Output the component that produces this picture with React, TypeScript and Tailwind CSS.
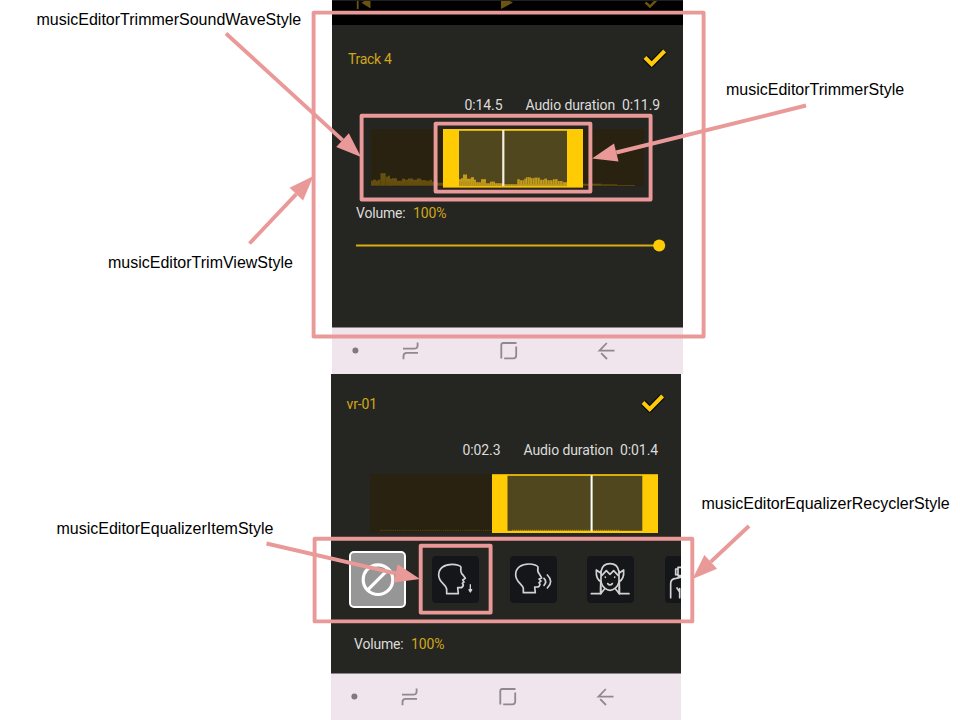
import type { ReactNode } from "react";

type Point = [number, number];
type Box = [number, number, number, number];
type Level = [number, number, number];

const BOXES: Box[] = [
  [313.6, 12.6, 703.6, 336.5],
  [361.6, 115.8, 650.6, 199.5],
  [435.6, 123.6, 590.4, 191.6],
  [314.6, 538.7, 692.3, 621.4],
  [420.7, 545.7, 490.6, 612.6],
];

const ARROWS: [Point, Point][] = [
  [[226, 33.5], [361, 157]],
  [[249.5, 243.5], [313.5, 176]],
  [[806, 105.5], [592, 158.5]],
  [[266.5, 543.5], [420, 579]],
  [[749, 526], [692.5, 579]],
];

const LABELS = [
  { text: "musicEditorTrimmerSoundWaveStyle", pos: "left-[36.5px] top-[8px]" },
  { text: "musicEditorTrimmerStyle", pos: "left-[726px] top-[78px]" },
  { text: "musicEditorTrimViewStyle", pos: "left-[108px] top-[251px]" },
  { text: "musicEditorEqualizerItemStyle", pos: "left-[56.5px] top-[517px]" },
  { text: "musicEditorEqualizerRecyclerStyle", pos: "left-[701.5px] top-[492px]" },
];

function Arrow({ from, to }: { from: Point; to: Point }) {
  const dx = to[0] - from[0];
  const dy = to[1] - from[1];
  const len = Math.hypot(dx, dy);
  const ux = dx / len;
  const uy = dy / len;
  const bx = to[0] - ux * 25;
  const by = to[1] - uy * 25;
  const h = 9.3;
  return (
    <g>
      <line x1={from[0]} y1={from[1]} x2={bx} y2={by} stroke="#ea9999" strokeWidth="3.9" />
      <polygon
        fill="#ea9999"
        points={`${to[0]},${to[1]} ${bx - uy * h},${by + ux * h} ${bx + uy * h},${by - ux * h}`}
      />
    </g>
  );
}

function Annotations() {
  return (
    <div className="pointer-events-none absolute inset-0">
      <svg width="960" height="720" className="absolute inset-0">
        {BOXES.map(([x1, y1, x2, y2]) => (
          <rect key={`${x1}-${y1}`} x={x1} y={y1} width={x2 - x1} height={y2 - y1} fill="none" stroke="#ea9999" strokeWidth="3.9" strokeLinejoin="round" />
        ))}
        {ARROWS.map(([a, b]) => (
          <Arrow key={a[0]} from={a} to={b} />
        ))}
      </svg>
      {LABELS.map((l) => (
        <span key={l.text} className={`absolute whitespace-nowrap text-[16px] leading-6 text-black ${l.pos}`}>
          {l.text}
        </span>
      ))}
    </div>
  );
}

function Check() {
  return (
    <svg width="26" height="22" viewBox="0 0.8 26 22" fill="none">
      <path d="M3.2 10.5 L9.7 17 L22.4 4" stroke="#0c0b08" strokeWidth="6.6" strokeLinejoin="round" />
      <path d="M3 10.3 L9.7 17 L22.6 3.8" stroke="#ffcb08" strokeWidth="4" />
    </svg>
  );
}

function NavBar() {
  return (
    <div className="h-[47px] shrink-0 border-t border-[#8b8588] bg-[#f0e4ed]">
      <svg width="350" height="46" viewBox="0 0 350 46" fill="none" stroke="#8f888d" strokeWidth="1.8">
        <circle cx="23.4" cy="22.6" r="3" fill="#807a7e" stroke="none" />
        <path d="M71 20.7 H82 Q85.6 20.7 85.6 17.5 V14.5 M71.5 31.3 V28 Q71.5 24.9 75 24.9 H86" />
        <path d="M169.3 30.5 V17 Q169.3 15 171.3 15 H184.5 M184.2 18.5 V27.5 Q184.2 30.3 181.4 30.3 H172.2" />
        <path d="M282.5 22.6 H267.5 L274.8 15 M269.2 25.2 L275 31" />
      </svg>
    </div>
  );
}

function Times({ start, duration }: { start: string; duration: string }) {
  return (
    <div className="flex h-6 items-center justify-end pr-[23px] text-[14px] text-[#dcdcda]">
      <span className="mr-[23px] tracking-[-0.1px]">{start}</span>
      <span className="mr-[7px] tracking-[-0.1px]">Audio duration</span>
      <span className="tracking-[-0.1px]">{duration}</span>
    </div>
  );
}

function Volume() {
  return (
    <div className="flex h-6 items-center gap-[7.5px] text-[14px]">
      <span className="tracking-[-0.2px] text-[#dcdcda]">Volume:</span>
      <span className="tracking-[-0.1px] text-[#d0a71a]">100%</span>
    </div>
  );
}

// Bar runs: [start x, end x, height]
const LEVELS: Level[] = [
  [0, 2, 5], [2, 5, 6], [5, 7, 5], [7, 9.5, 6], [9.5, 14.7, 12.5], [14.7, 17, 9], [17, 19, 10],
  [19, 21, 7], [21, 26, 7.5], [26, 31, 5], [31, 34, 7], [34, 37, 6], [37, 42, 7.2], [42, 46, 6],
  [46, 50, 7.2], [50, 55, 5.6], [55, 59, 5], [59, 61, 6], [61, 67, 4], [67, 72, 3],
  [88, 90, 7], [90, 92, 8], [92, 96, 11.7], [96, 100, 7.5], [100, 103, 9], [103, 105, 6.5],
  [105, 110, 4], [110, 115, 7], [115, 119, 3], [119, 124, 4.6], [124, 131, 3], [131, 146, 2],
  [146, 149, 7], [149, 153, 6], [153, 155, 7.5], [155, 160, 9], [160, 163, 8], [163, 169, 8.6],
  [169, 173, 6.5], [173, 176, 7.6], [176, 182, 6], [182, 187, 7], [187, 192, 5.2], [192, 196, 4],
  [212, 230, 2], [230, 246, 1.3], [246, 264, 0.7],
];

function LongTrimmer() {
  return (
    <svg width="288" height="59" className="block">
      <rect x="0" y="0" width="273" height="57.5" fill="#2a2211" />
      {LEVELS.filter((l) => l[0] < 80 || l[0] > 200).map(([a, b, h]) => (
        <rect key={a} x={a} y={56.7 - h} width={b - a} height={h} fill="#66500f" />
      ))}
      <rect x="72" y="0" width="140" height="58.6" fill="#ffcb05" />
      <rect x="88" y="1.8" width="108" height="54.9" fill="#51471f" />
      {LEVELS.filter((l) => l[0] > 80 && l[0] < 200).map(([a, b, h]) => (
        <rect key={a} x={a} y={57.2 - h} width={b - a} height={h} fill="#c39c1b" />
      ))}
      <path d="M0.5 54.5 H72 M88 54.5 H146" stroke="#3d2f08" strokeOpacity=".2" strokeWidth="4" strokeDasharray="0.6 1.3" />
      <path d="M146 51.5 H192" stroke="#51471f" strokeOpacity=".5" strokeWidth="8" strokeDasharray="0.7 1.8" />
      <rect x="131.2" y="1" width="2.2" height="56" fill="#f3efdf" />
    </svg>
  );
}

function ShortTrimmer() {
  return (
    <svg width="288" height="59" className="block">
      <rect width="124" height="58.5" fill="#2a2211" />
      <path d="M10 56.4 H122" stroke="#5b470f" strokeWidth="0.9" strokeDasharray="1.3 0.8" />
      <rect x="122" y="0" width="166" height="59" fill="#ffcb05" />
      <rect x="122" y="0" width="166" height="1" fill="#d8ab0d" />
      <rect x="137.5" y="1.8" width="134.8" height="55" fill="#51471f" />
      <path d="M142 56.3 H250" stroke="#c39c1b" strokeWidth="1" strokeDasharray="1.2 0.8" />
      <rect x="220.6" y="1.2" width="2" height="56" fill="#fff" />
    </svg>
  );
}

function Tile({ children }: { children: ReactNode }) {
  return (
    <div className="h-[47px] w-[47px] shrink-0 rounded-[4px] bg-[#15161a]">
      <svg width="47" height="47" viewBox="0 0 141 141" fill="none" stroke="#d3d3d3" strokeWidth="5" strokeLinejoin="round" strokeLinecap="round">
        {children}
      </svg>
    </div>
  );
}

function Equalizer() {
  return (
    <div className="flex h-[57px] items-center overflow-hidden pl-[18px]">
      <div className="mr-[26px] flex h-[57px] w-[57px] shrink-0 items-center justify-center rounded-[5px] border-2 border-white bg-[#969696]">
        <svg width="36" height="36" viewBox="0 0 36 36" fill="none" stroke="#fff" strokeWidth="3.2">
          <circle cx="18" cy="17.7" r="14.8" />
          <path d="M8 27.7 L28 7.7" />
        </svg>
      </div>
      <div className="flex gap-[30.7px]">
        <Tile>
          <path d="M44 113 V99 C41 83 20 80 20 57 C20 36 38 25 60 25 C74 25 87 29 87 34 C85 45 87 52 93 57 L100 67 L92 72 L96 78 L91 82 L94 87 Q92 96 84 95 H77 L79 113 Z" />
          <path d="M115 86 V105" strokeWidth="4" />
          <path d="M111 101 L115 108 L119 101 Z" strokeWidth="4" fill="#d3d3d3" />
        </Tile>
        <Tile>
          <path d="M40 110 V97 C36 82 17 78 17 56 C17 35 35 24 56 24 C70 24 84 29 84 34 C82 45 84 50 88 54 L95 66 L87 69 L93 75 L87 80 L90 85 Q88 94 80 93 H74 L76 110 Z" />
          <path d="M102 67 Q112 77 102 88 M112 57 Q132 76 112 96" />
        </Tile>
        <Tile>
          <path d="M13 113 H41 V92 M126 113 H97 V92 M42 46 C45 31 54 23 69 23 C84 23 93 31 96 46" />
          <path d="M41 51 L28 42 Q26 70 42 77 M97 51 L110 42 Q112 70 96 77" />
          <path d="M42 46 V78 C45 94 60 103 69 103 C78 103 93 94 96 78 V46 M44 59 L58 44 L69 55 L80 44 L94 59" />
          <path d="M41 78 V113 L53 98 M97 78 V113 L85 98" />
          <path d="M55 63 V64 M83 63 V64" />
          <path d="M62 83 Q69 91 76 83" />
        </Tile>
        <Tile>
          <path d="M17 125 V83 Q17 68 33 67 L56 61 M36 96 L44 108 V125 M44 108 V98 M32 39 H39 V56 H32 Z M39 34 H70 V59 H39 Z M42 59 V66" />
        </Tile>
      </div>
    </div>
  );
}

function TrackScreen() {
  return (
    <section className="ml-[332px] flex h-[374px] w-[351px] flex-col bg-[#252522]">
      <div className="h-[25px] shrink-0 border-t border-[#202020] bg-black">
        <svg width="350" height="12" fill="#6b5410">
          <rect x="24.8" y="-1" width="1.8" height="9" />
          <path d="M38.5 -4 V7.5 L29.5 1.8 Z M169 -4 V8 L181 1.6 Z" />
          <path d="M313.5 1.5 L318 5.5 L325.5 -2" fill="none" stroke="#6b5410" strokeWidth="2.4" />
        </svg>
      </div>
      <div className="flex h-[68px] items-center justify-between pl-[16px] pr-[15px]">
        <span className="text-[14px] tracking-[-0.3px] text-[#d0a71a]">Track 4</span>
        <Check />
      </div>
      <Times start="0:14.5" duration="0:11.9" />
      <div className="mt-[11.5px] h-[59px] pl-[39px]">
        <LongTrimmer />
      </div>
      <div className="mt-[13.5px] pl-[24px]">
        <Volume />
      </div>
      <svg width="351" height="14" className="mt-[13px] block">
        <rect x="24" y="6.5" width="298" height="2" fill="#dcac12" />
        <circle cx="327.2" cy="7.5" r="6" fill="#ffcb05" />
      </svg>
      <div className="grow" />
      <NavBar />
    </section>
  );
}

function VoiceScreen() {
  return (
    <section className="ml-[331px] flex h-[346px] w-[350px] flex-col bg-[#252522]">
      <div className="flex h-[60px] items-center justify-between pl-[15.5px] pr-[15px]">
        <span className="text-[14px] tracking-[-0.15px] text-[#d0a71a]">vr-01</span>
        <Check />
      </div>
      <div className="mt-[4px]">
        <Times start="0:02.3" duration="0:01.4" />
      </div>
      <div className="mt-[12px] h-[59px] pl-[39px]">
        <ShortTrimmer />
      </div>
      <div className="mt-[18px]">
        <Equalizer />
      </div>
      <div className="mt-[24px] pl-[23px]">
        <Volume />
      </div>
      <div className="grow" />
      <NavBar />
    </section>
  );
}

export default function App() {
  return (
    <main className="relative h-[720px] w-[960px] overflow-hidden bg-white font-['Liberation_Sans',Arial,sans-serif]">
      <div className="font-[Roboto,sans-serif]">
        <TrackScreen />
        <VoiceScreen />
      </div>
      <Annotations />
    </main>
  );
}
